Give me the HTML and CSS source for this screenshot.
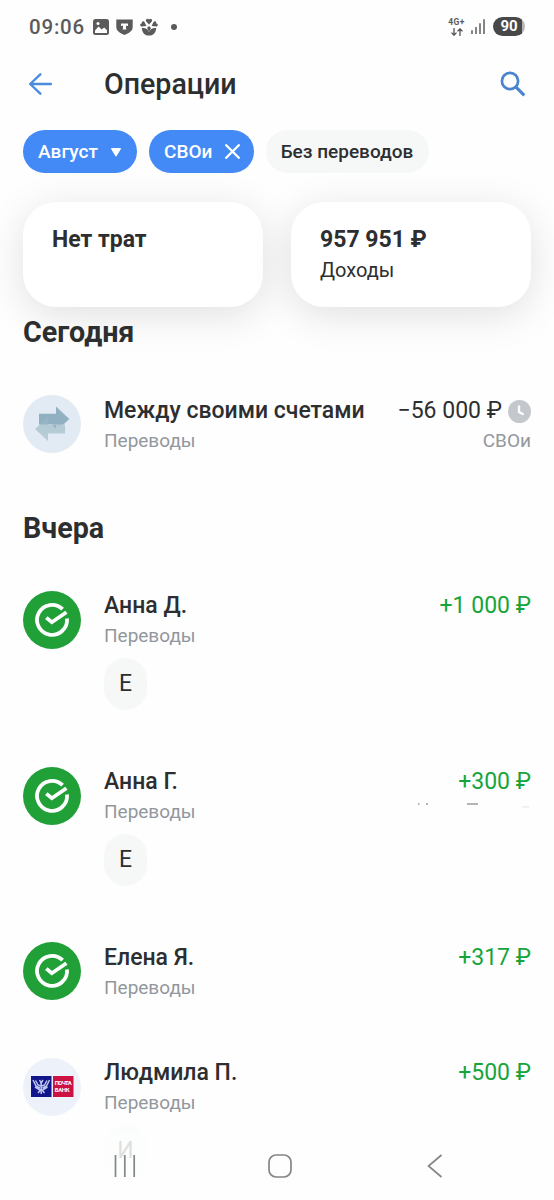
FILE: index.html
```html
<!DOCTYPE html>
<html lang="ru">
<head>
<meta charset="utf-8">
<title>Операции</title>
<link rel="stylesheet" href="styles.css">
</head>
<body>
<svg class="defs" width="0" height="0">
  <symbol id="check-logo" viewBox="0 0 58 58">
    <circle cx="29" cy="29" r="29" fill="#21a038"/>
    <path d="M39.6 18.2A15 15 0 1 0 44 27.5" fill="none" stroke="#fff" stroke-width="3.8"/>
    <path d="M23.3 26.6L28.8 31.2L43.4 21.2" fill="none" stroke="#fff" stroke-width="3.8"/>
  </symbol>
</svg>
<div class="screen">
  <div class="status">
    <span class="time">09:06</span>
    <svg class="st-icon" width="16" height="16" viewBox="0 0 16 16"><rect width="16" height="16" rx="2.5" fill="#5b5b5b"/><path d="M2 11.4L5.6 7.6L8.6 10.5L11.2 8.4L14 11.2V14H2Z" fill="#fff"/><circle cx="5" cy="4.6" r="1.5" fill="#fff"/></svg>
    <svg class="st-icon" width="17" height="16" viewBox="0 0 17 16"><path d="M0.3 0.5H16.7V8C16.7 12 13 14.2 8.5 16C4 14.2 0.3 12 0.3 8Z" fill="#5b5b5b"/><path d="M5 4.6H12V7H11.1L10 6.6V9.4L10.6 10.4H6.4L7 9.4V6.6L5.9 7H5Z" fill="#fff"/></svg>
    <svg class="st-icon" width="18" height="18" viewBox="0 0 18 18"><g fill="#5b5b5b"><path d="M9 6.4L6 3.2C5.3 1.3 7.8 -.2 9 1.5C10.2 -.2 12.7 1.3 12 3.2Z"/><path d="M6.4 8L1.2 8.4C-.6 7.2 .3 5.5 1.8 5.5C1.4 3.4 3.6 2.6 4.5 4.1Z"/><path d="M11.6 8L16.8 8.4C18.6 7.2 17.7 5.5 16.2 5.5C16.6 3.4 14.4 2.6 13.5 4.1Z"/><path d="M1.8 10.2C5.2 9.7 7.6 11 9 14C10.4 11 12.8 9.7 16.2 10.2C16 14.7 13 17.6 9 17.6C5 17.6 2 14.7 1.8 10.2Z"/><path d="M9 8L11 10L9 14L7 10Z"/></g></svg>
    <span class="dot"></span>
    <span class="grow"></span>
    <div class="net"><span class="net-type">4G+</span>
      <svg width="12" height="8" viewBox="0 0 12 8"><path d="M3 0V7M.5 4.6L3 7.2L5.5 4.6M9 8V1M6.5 3.4L9 .8L11.5 3.4" fill="none" stroke="#555" stroke-width="1.3"/></svg>
    </div>
    <svg class="signal" width="14" height="15" viewBox="0 0 14 15"><path d="M1 11.2V15M5 8V15M9 4.3V15M13 .3V15" stroke="#666" stroke-width="1.6"/></svg>
    <span class="battery">90</span>
  </div>
  <header class="header">
    <svg class="back" width="24" height="24" viewBox="0 0 24 24"><path d="M12.3 2.3L2.2 12L12.3 21.7M2.2 12H23" fill="none" stroke="#4a8ddd" stroke-width="2.4" stroke-linecap="round" stroke-linejoin="round"/></svg>
    <h1 class="title">Операции</h1>
    <svg class="search" width="26" height="26" viewBox="0 0 26 26"><circle cx="10" cy="10" r="8.1" fill="none" stroke="#4985cf" stroke-width="2.7"/><path d="M15.8 15.8L24.3 24.3" stroke="#4985cf" stroke-width="3.1"/></svg>
  </header>
  <div class="chips">
    <div class="chip chip-month">Август<svg width="12" height="10" viewBox="0 0 12 10"><path d="M1.4 1.6H10.6L6 9.2Z" fill="#fff" stroke="#fff" stroke-linejoin="round"/></svg></div>
    <div class="chip chip-account">СВОи<svg width="15" height="15" viewBox="0 0 15 15"><path d="M1.2 1.2L13.8 13.8M13.8 1.2L1.2 13.8" stroke="#fff" stroke-width="2.3" stroke-linecap="round"/></svg></div>
    <div class="chip chip-light">Без переводов</div>
  </div>
  <div class="cards">
    <div class="card"><div class="card-sum">Нет трат</div></div>
    <div class="card"><div class="card-sum money">957 951 ₽</div><div class="card-label">Доходы</div></div>
  </div>
  <h2 class="section today">Сегодня</h2>
  <div class="row first">
    <svg class="avatar" viewBox="0 0 58 58"><circle cx="29" cy="29" r="29" fill="#e2eaf4"/><path d="M16 18.8H33V11.5L46.3 24L33 36.5V29.5H16Z" fill="#91b1c2"/><path d="M42 29.5V38.5H25V46L12 34L25 22V29.5Z" fill="#b5ccd7"/><path d="M20 26.5L25 22V29.5H33V34L29 29.5H17Z" fill="#7da4b7" opacity=".55"/></svg>
    <div class="info"><div class="name">Между своими счетами</div><div class="sub">Переводы</div></div>
    <div class="side"><div class="amount pending"><span>−56 000 ₽</span><svg width="23" height="23" viewBox="0 0 23 23"><circle cx="11.5" cy="11.5" r="11.5" fill="#c4c8cd"/><path d="M11 5.5V12L15.6 14.6" fill="none" stroke="#fff" stroke-width="2.3"/></svg></div><div class="sub">СВОи</div></div>
  </div>
  <h2 class="section yesterday">Вчера</h2>
  <div class="list">
    <div class="row">
      <svg class="avatar"><use href="#check-logo"/></svg>
      <div class="info"><div class="name">Анна Д.</div><div class="sub">Переводы</div><div class="note">Е</div></div>
      <div class="side"><div class="amount plus">+1 000 ₽</div></div>
    </div>
    <div class="row">
      <svg class="avatar"><use href="#check-logo"/></svg>
      <div class="info"><div class="name">Анна Г.</div><div class="sub">Переводы</div><div class="note">Е</div></div>
      <div class="side"><div class="amount plus">+300 ₽</div><svg class="remnant" width="114" height="6" viewBox="0 0 114 6"><path d="M1 1H2.5M9 1H11M50 1H61" stroke="#999da1" stroke-width="1.6"/><path d="M105 4H112" stroke="#e4e4e4"/></svg></div>
    </div>
    <div class="row plain">
      <svg class="avatar"><use href="#check-logo"/></svg>
      <div class="info"><div class="name">Елена Я.</div><div class="sub">Переводы</div></div>
      <div class="side"><div class="amount plus">+317 ₽</div></div>
    </div>
    <div class="row">
      <svg class="avatar" viewBox="0 0 58 58"><circle cx="29" cy="29" r="29" fill="#edf2fa"/><rect x="8" y="18" width="20.5" height="21" fill="#10158a"/><rect x="30" y="18" width="20.5" height="21" fill="#cc1243"/><g fill="none" stroke="#bdc5ed" stroke-width="1.5"><path d="M10 22L13 28L17 30M12.5 22.5L15 27L18 28M26.5 22L23.5 28L19.5 30M24 22.5L21.5 27L18.5 28M12 29L17 32M24.5 29L19.5 32M16.5 22L18.2 25L20 22"/><path d="M18.2 24V36M15 35L18.2 31L21.5 35"/></g><text class="bank-word" x="31.7" y="27.2" textLength="17">ПОЧТА</text><text class="bank-word" x="31.7" y="34.2" textLength="15">БАНК</text></svg>
      <div class="info"><div class="name">Людмила П.</div><div class="sub">Переводы</div><div class="note faded">И</div></div>
      <div class="side"><div class="amount plus">+500 ₽</div></div>
    </div>
  </div>
  <nav class="navbar">
    <svg width="22" height="22" viewBox="0 0 22 22"><path d="M1.5 0V22M10.8 0V22M20.2 0V22" stroke="#858585" stroke-width="1.7"/></svg>
    <svg class="home" width="24" height="24" viewBox="0 0 24 24"><rect x="1" y="1" width="22" height="22" rx="7" fill="none" stroke="#858585" stroke-width="1.7"/></svg>
    <svg width="16" height="24" viewBox="0 0 16 24"><path d="M14.5 1L1.5 12L14.5 23" fill="none" stroke="#858585" stroke-width="1.7"/></svg>
  </nav>
</div>
</body>
</html>
```
FILE: styles.css
```css
* { box-sizing: border-box; }
body { margin: 0; background: #fff; font-family: Roboto, "Liberation Sans", sans-serif; color: #2d2e30; }
svg { display: block; flex: none; }
.defs { position: absolute; }
.screen { position: relative; width: 554px; height: 1200px; overflow: hidden; background: #fefefe; }
.status { display: flex; align-items: center; height: 53px; padding: 0 29px; color: #5b5b5b; }
.time { width: 57px; font-size: 20.5px; font-weight: 500; letter-spacing: 0.8px; margin-right: 7px; white-space: nowrap; }
.st-icon { margin-right: 7px; }
.dot { width: 6px; height: 6px; border-radius: 50%; background: #5b5b5b; margin-left: 6px; }
.grow { flex: 1; }
.net { display: flex; flex-direction: column; align-items: center; gap: 1px; margin-right: 6px; }
.net-type { font-size: 8.5px; line-height: 9px; font-weight: 700; letter-spacing: 0.5px; }
.signal { margin-right: 8px; }
.battery { width: 32px; height: 19px; border-radius: 10px; background: linear-gradient(90deg, #484848 91%, #b5b5b5 91%); color: #fff; font-size: 15px; line-height: 19px; font-weight: 700; text-align: center; }
.header { display: flex; align-items: center; height: 62px; padding: 0 28px; }
.back { margin-right: 52px; }
.title { flex: 1; margin: 0; font-size: 28.6px; font-weight: 500; line-height: 34px; }
.chips { display: flex; gap: 12px; padding: 15px 23px 0; }
.chip { display: flex; align-items: center; height: 43px; border-radius: 22px; font-size: 19px; font-weight: 500; white-space: nowrap; background: #438af7; color: #fff; }
.chip-month { width: 114px; padding: 0 15px; justify-content: space-between; }
.chip-account { width: 105px; padding: 0 14px 0 15px; justify-content: space-between; }
.chip-light { width: 163px; padding-right: 1px; justify-content: center; background: #f6f8f8; color: #2d2e30; }
.cards { display: flex; gap: 28px; padding: 29px 23px 0; }
.card { width: 240px; height: 105px; padding: 23px 29px; border-radius: 33px; background: #fff; box-shadow: 0 8px 40px rgba(0, 0, 0, 0.12); }
.card-sum { font-size: 23px; font-weight: 700; line-height: 30px; }
.card-label { font-size: 20px; line-height: 31px; }
.section { position: relative; margin: 0; padding-left: 23px; font-size: 28.7px; font-weight: 700; line-height: 36px; }
.today { margin-top: 7px; }
.yesterday { margin-top: 55px; }
.row { display: flex; align-items: flex-start; height: 119px; padding: 0 23px; }
.first { height: 60px; margin-top: 45px; }
.plain { height: 59px; }
.first .info, .first .side, .plain .info, .plain .side { padding-top: 1px; }
.avatar { width: 58px; height: 58px; margin-right: 23px; }
.info { flex: 1; }
.side { display: flex; flex-direction: column; align-items: flex-end; }
.name, .amount { font-size: 23px; line-height: 30px; white-space: nowrap; }
.name { font-weight: 500; }
.sub { font-size: 19px; line-height: 29px; color: #92979d; }
.plus { color: #17a53b; }
.pending { display: flex; align-items: center; gap: 6px; }
.list { display: flex; flex-direction: column; gap: 56.5px; margin-top: 45px; }
.note { width: 43px; height: 52px; margin-top: 8px; border-radius: 22px; background: #f6f8f8; font-size: 23px; line-height: 52px; text-align: center; }
.faded { opacity: 0.3; }
.remnant { margin-top: 6px; }
.bank-word { font: 700 6px Roboto, sans-serif; fill: #fff; }
.navbar { position: absolute; left: 0; right: 0; bottom: 0; height: 69px; display: flex; align-items: center; justify-content: space-between; padding: 0 111px 0 114px; background: rgba(254, 254, 254, 0.5); }
.home { margin-right: 4px; }
```
